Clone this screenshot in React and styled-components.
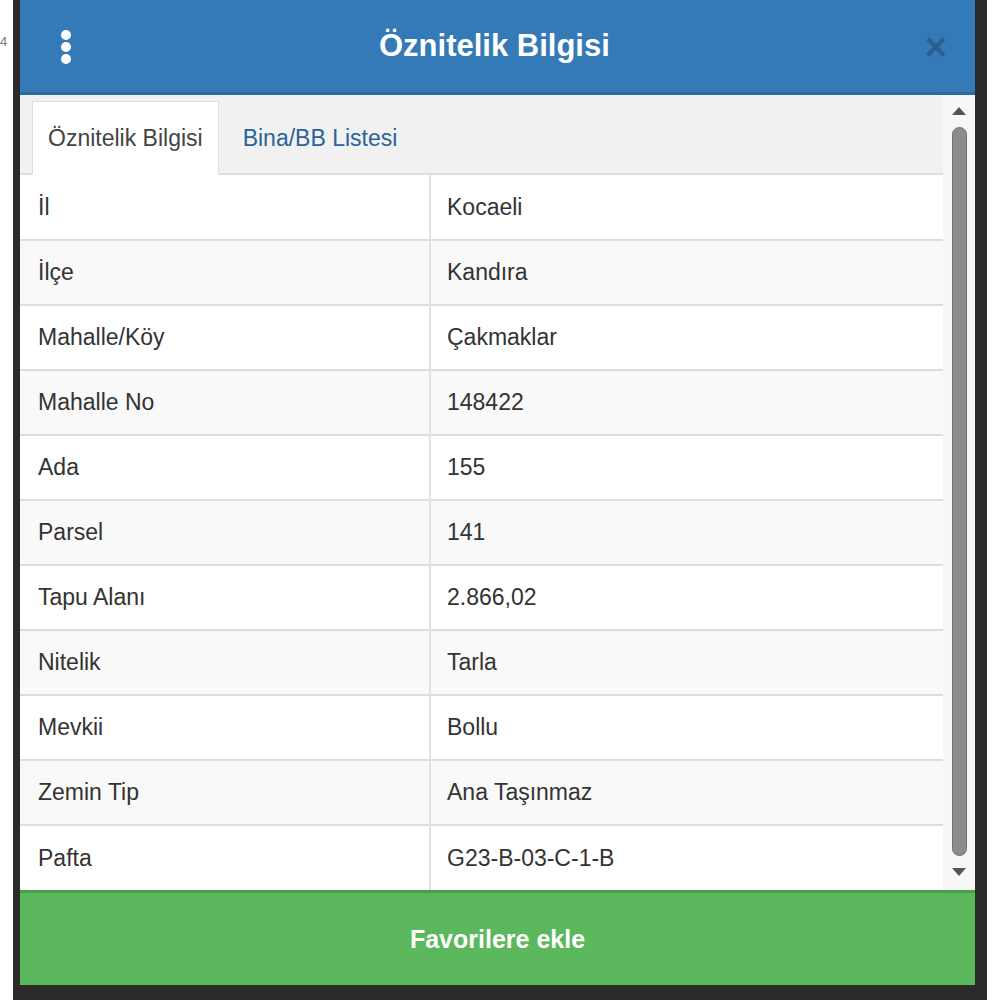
import React, { useState } from "react";
import styled, { createGlobalStyle } from "styled-components";

const GlobalStyle = createGlobalStyle`
	html, body {
		margin: 0;
		padding: 0;
		background: #ffffff;
		font-family: "Liberation Sans", Arial, sans-serif;
	}
	* {
		box-sizing: border-box;
	}
`;

const rows = [
	["İl", "Kocaeli"],
	["İlçe", "Kandıra"],
	["Mahalle/Köy", "Çakmaklar"],
	["Mahalle No", "148422"],
	["Ada", "155"],
	["Parsel", "141"],
	["Tapu Alanı", "2.866,02"],
	["Nitelik", "Tarla"],
	["Mevkii", "Bollu"],
	["Zemin Tip", "Ana Taşınmaz"],
	["Pafta", "G23-B-03-C-1-B"],
];

function App() {
	const [activeTab, setActiveTab] = useState(0);

	return (
		<>
			<GlobalStyle />
			<Page>
				<Gutter>
					<MapLabel>4</MapLabel>
				</Gutter>
				<Frame>
					<Panel>
						<Header>
							<MenuButton aria-label="menu">
								<svg width="12" height="36" viewBox="0 0 12 36">
									<circle cx="6" cy="6" r="5" fill="#fff" />
									<circle cx="6" cy="18" r="5" fill="#fff" />
									<circle cx="6" cy="30" r="5" fill="#fff" />
								</svg>
							</MenuButton>
							<Title>Öznitelik Bilgisi</Title>
							<CloseButton aria-label="close">×</CloseButton>
						</Header>
						<Body>
							<Content>
								<TabBar>
									<Tab $active={activeTab === 0} onClick={() => setActiveTab(0)}>
										Öznitelik Bilgisi
									</Tab>
									<Tab $active={activeTab === 1} onClick={() => setActiveTab(1)}>
										Bina/BB Listesi
									</Tab>
								</TabBar>
								<Table>
									<tbody>
										{rows.map(([label, value], i) => (
											<Row key={label} $striped={i % 2 === 1}>
												<LabelCell>{label}</LabelCell>
												<ValueCell>{value}</ValueCell>
											</Row>
										))}
									</tbody>
								</Table>
							</Content>
							<ScrollBar>
								<Arrow>
									<svg width="14" height="8" viewBox="0 0 14 8">
										<path d="M7 0 L14 8 L0 8 Z" fill="#555" />
									</svg>
								</Arrow>
								<Thumb />
								<Arrow>
									<svg width="14" height="8" viewBox="0 0 14 8">
										<path d="M0 0 L14 0 L7 8 Z" fill="#555" />
									</svg>
								</Arrow>
							</ScrollBar>
						</Body>
						<FavButton>Favorilere ekle</FavButton>
					</Panel>
				</Frame>
			</Page>
		</>
	);
}

export default App;

const Page = styled.div`
	display: flex;
	height: 1000px;
	width: 1000px;
`;

const Gutter = styled.div`
	width: 13px;
	padding-top: 32px;
	overflow: hidden;
`;

const MapLabel = styled.span`
	font-size: 13px;
	color: #777;
`;

const Frame = styled.div`
	width: 974px;
	height: 1000px;
	background: #2b2a28;
	padding: 0 12px 15px 7px;
	display: flex;
`;

const Panel = styled.div`
	flex: 1;
	display: flex;
	flex-direction: column;
	background: #ffffff;
`;

const Header = styled.header`
	height: 95px;
	background: #337ab7;
	border-bottom: 3px solid #2c6aa0;
	display: flex;
	align-items: center;
	padding: 0 26px 0 40px;
`;

const MenuButton = styled.div`
	width: 12px;
	display: flex;
	align-items: center;
	margin-top: 2px;
`;

const Title = styled.h1`
	flex: 1;
	margin: 0;
	text-align: center;
	color: #ffffff;
	font-size: 31px;
	font-weight: 700;
	padding-right: 8px;
`;

const CloseButton = styled.div`
	font-size: 38px;
	font-weight: 700;
	line-height: 1;
	color: #2a5e8f;
	margin-top: 2px;
	margin-right: 2px;
`;

const Body = styled.div`
	height: 795px;
	display: flex;
`;

const Content = styled.div`
	flex: 1;
	display: flex;
	flex-direction: column;
`;

const TabBar = styled.div`
	height: 81px;
	background: #f1f1f1;
	display: flex;
	align-items: flex-end;
	padding-left: 12px;
	border-bottom: 2px solid #dddddd;
`;

const Tab = styled.div`
	height: 74px;
	margin-bottom: -2px;
	display: flex;
	align-items: center;
	padding: 0 15px;
	margin-right: 8px;
	font-size: 23px;
	cursor: pointer;
	color: ${(p) => (p.$active ? "#444444" : "#2a6496")};
	background: ${(p) => (p.$active ? "#ffffff" : "transparent")};
	border: 1px solid ${(p) => (p.$active ? "#dddddd" : "transparent")};
	border-bottom-color: ${(p) => (p.$active ? "#ffffff" : "transparent")};
`;

const Table = styled.table`
	width: 100%;
	border-collapse: collapse;
	table-layout: fixed;
`;

const Row = styled.tr`
	height: 65px;
	background: ${(p) => (p.$striped ? "#f9f9f9" : "#ffffff")};
	border-top: 2px solid #dddddd;

	&:first-child {
		border-top: none;
	}
`;

const LabelCell = styled.td`
	width: 410px;
	padding: 0 18px;
	font-size: 23px;
	color: #333333;
	border-right: 2px solid #e2e2e2;
	vertical-align: middle;
`;

const ValueCell = styled.td`
	padding: 0 16px;
	font-size: 23px;
	color: #333333;
	vertical-align: middle;
`;

const ScrollBar = styled.div`
	width: 32px;
	background: #f7f7f7;
	display: flex;
	flex-direction: column;
	align-items: center;
	padding: 10px 0 12px;
	gap: 10px;
`;

const Arrow = styled.div`
	height: 12px;
	display: flex;
	align-items: center;
	justify-content: center;
`;

const Thumb = styled.div`
	flex: 1;
	width: 15px;
	background: #8c8c8c;
	border: 1px solid #6f6f6f;
	border-radius: 8px;
`;

const FavButton = styled.button`
	height: 95px;
	border: none;
	border-top: 3px solid #4a9e4a;
	background: #5cb85c;
	color: #ffffff;
	font-family: "Liberation Sans", Arial, sans-serif;
	font-size: 25px;
	font-weight: 700;
	cursor: pointer;
`;
